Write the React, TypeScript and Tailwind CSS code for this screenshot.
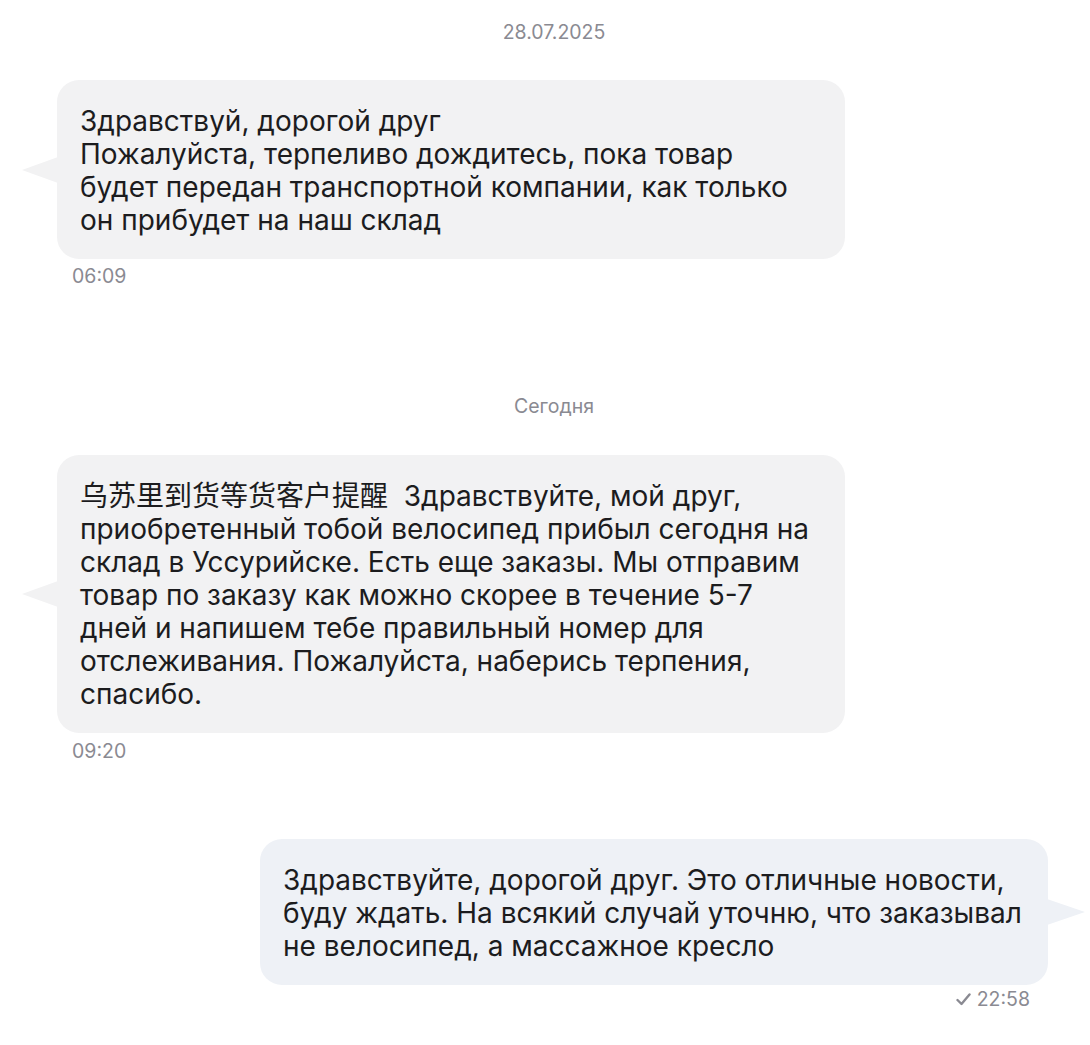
const font = { fontFamily: '"Inter", "Noto Sans CJK SC", sans-serif' };

function Tail({ side, color }: { side: "left" | "right"; color: string }) {
  if (side === "left") {
    return (
      <svg className="absolute top-1/2 -left-[35px] -translate-y-1/2" width="36" height="30" viewBox="0 0 36 30">
        <polygon points="0,15 36,2 36,28" fill={color} />
      </svg>
    );
  }
  return (
    <svg className="absolute top-1/2 -right-[37px] -translate-y-1/2" width="38" height="30" viewBox="0 0 38 30">
      <polygon points="38,15 0,2 0,28" fill={color} />
    </svg>
  );
}

function Bubble({
  lines,
  side,
}: {
  lines: string[];
  side: "left" | "right";
}) {
  const color = side === "left" ? "#f2f2f3" : "#eef1f6";
  return (
    <div
      className={
        "relative w-[788px] rounded-[22px] px-[23px] pt-[25px] pb-[22px] text-[28px] leading-[33px] text-[#1c1c1e] " +
        (side === "left" ? "bg-[#f2f2f3]" : "bg-[#eef1f6]")
      }
    >
      <Tail side={side} color={color} />
      {lines.map((l, i) => (
        <div key={i} className="whitespace-pre">
          {l}
        </div>
      ))}
    </div>
  );
}

export default function App() {
  return (
    <div className="flex min-h-[1045px] w-[1090px] flex-col bg-white" style={font}>
      <div className="mt-5 pl-[18px] text-center text-[19.5px] leading-6 text-[#8a8a92]">28.07.2025</div>

      <div className="mt-9 ml-[57px]">
        <Bubble
          side="left"
          lines={[
            "Здравствуй, дорогой друг",
            "Пожалуйста, терпеливо дождитесь, пока товар",
            "будет передан транспортной компании, как только",
            "он прибудет на наш склад",
          ]}
        />
        <div className="mt-[5px] ml-[15px] text-[19.5px] leading-6 text-[#8a8a92]">06:09</div>
      </div>

      <div className="mt-[106px] pl-[18px] text-center text-[19.5px] leading-6 text-[#8a8a92]">Сегодня</div>

      <div className="mt-[37px] ml-[57px]">
        <Bubble
          side="left"
          lines={[
            "乌苏里到货等货客户提醒  Здравствуйте, мой друг,",
            "приобретенный тобой велосипед прибыл сегодня на",
            "склад в Уссурийске. Есть еще заказы. Мы отправим",
            "товар по заказу как можно скорее в течение 5-7",
            "дней и напишем тебе правильный номер для",
            "отслеживания. Пожалуйста, наберись терпения,",
            "спасибо.",
          ]}
        />
        <div className="mt-[6px] ml-[15px] text-[19.5px] leading-6 text-[#8a8a92]">09:20</div>
      </div>

      <div className="mt-[76px] mr-[42px] flex flex-col items-end">
        <Bubble
          side="right"
          lines={[
            "Здравствуйте, дорогой друг. Это отличные новости,",
            "буду ждать. На всякий случай уточню, что заказывал",
            "не велосипед, а массажное кресло",
          ]}
        />
        <div className="mt-[2px] mr-[18px] flex items-center gap-[6px] text-[19.5px] leading-6 text-[#8a8a92]">
          <svg width="15" height="13" viewBox="0 0 15 13">
            <path d="M1.5 7 L5.5 11 L13.5 1.5" fill="none" stroke="#8a8a92" strokeWidth="2.4" strokeLinecap="round" strokeLinejoin="round" />
          </svg>
          22:58
        </div>
      </div>
    </div>
  );
}
